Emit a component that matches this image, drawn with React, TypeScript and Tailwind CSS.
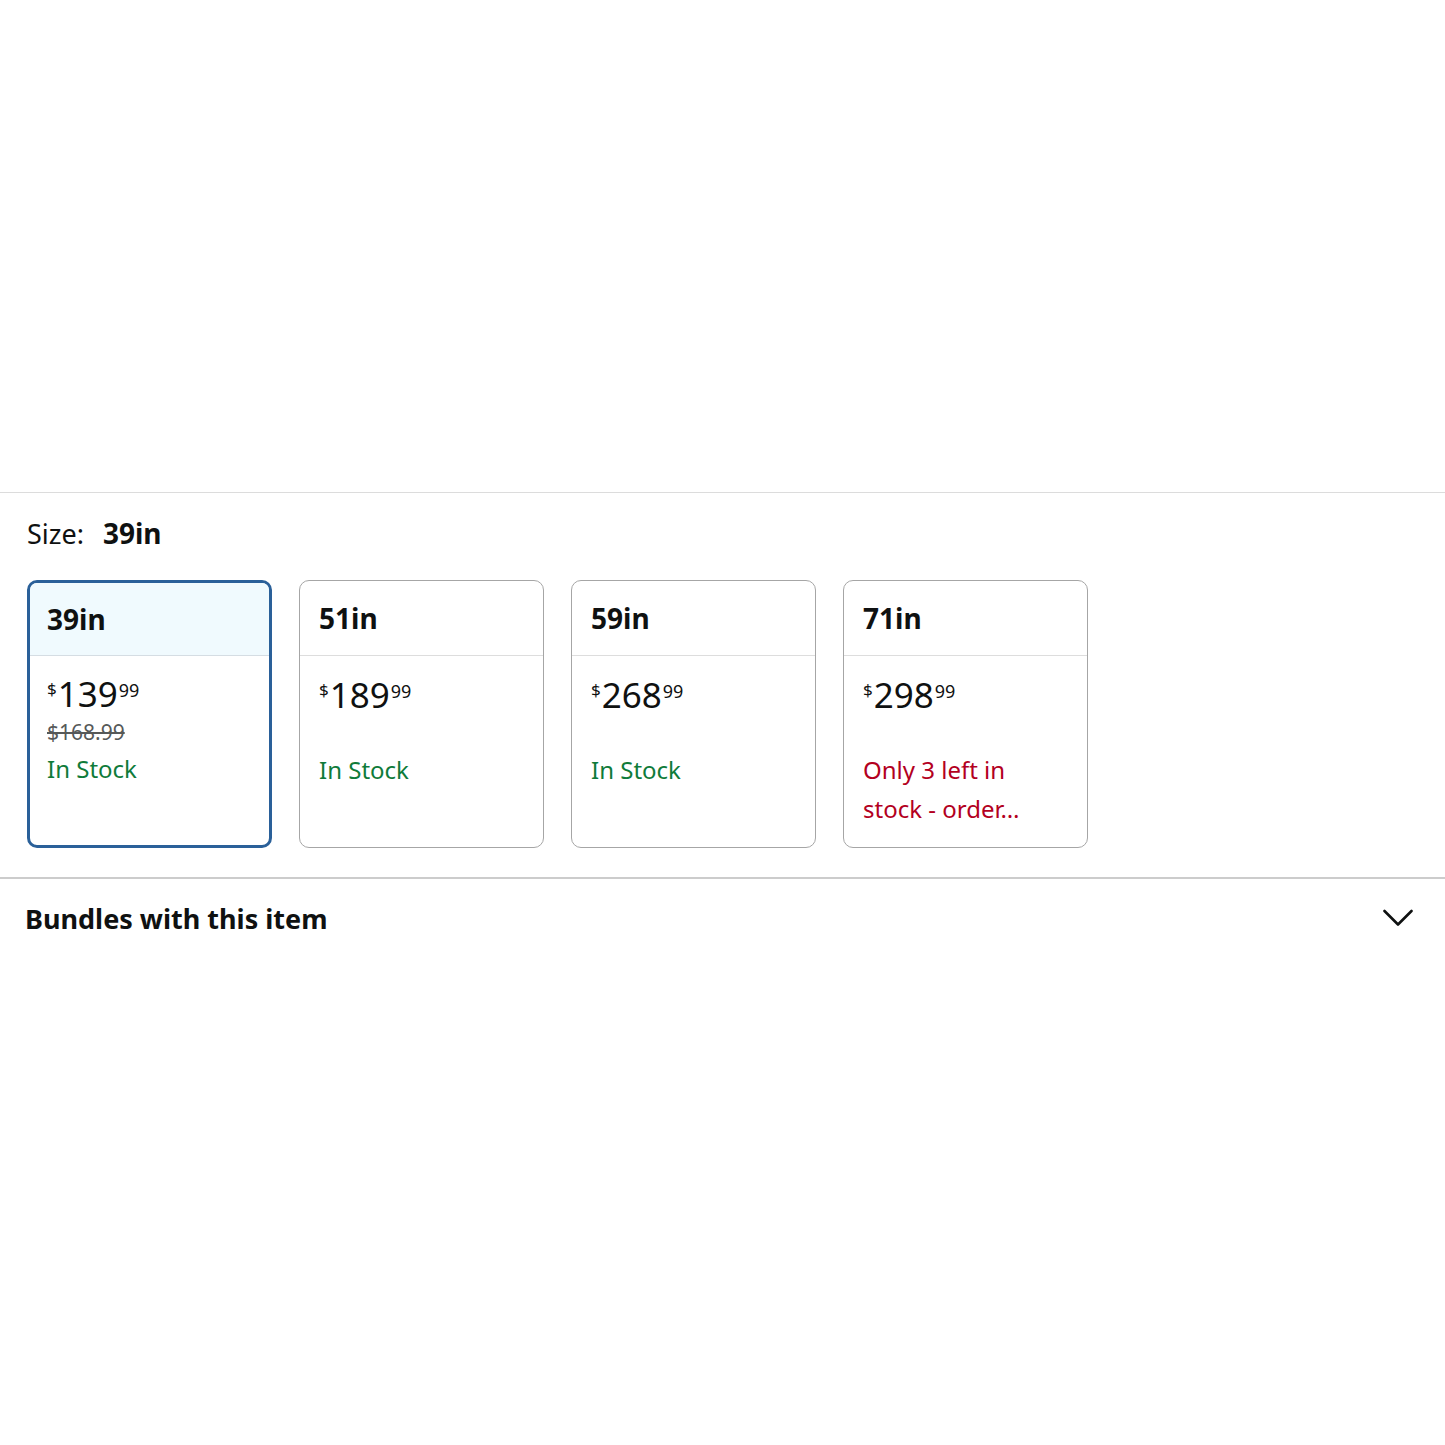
interface SizeOption {
  label: string;
  dollars: string;
  cents: string;
  listPrice?: string;
  stock: string[];
  lowStock?: boolean;
}

const options: SizeOption[] = [
  { label: '39in', dollars: '139', cents: '99', listPrice: '$168.99', stock: ['In Stock'] },
  { label: '51in', dollars: '189', cents: '99', stock: ['In Stock'] },
  { label: '59in', dollars: '268', cents: '99', stock: ['In Stock'] },
  { label: '71in', dollars: '298', cents: '99', stock: ['Only 3 left in', 'stock - order…'], lowStock: true },
];

function SizeCard({ option, selected }: { option: SizeOption; selected: boolean }) {
  return (
    <div
      className={
        selected
          ? 'w-[245px] h-[268px] rounded-[10px] border-[3px] border-[#2a6099] overflow-hidden flex flex-col'
          : 'w-[245px] h-[268px] rounded-[10px] border border-[#a6a6a6] overflow-hidden flex flex-col'
      }
    >
      <div
        className={
          selected
            ? 'h-[73px] flex items-center pl-[17px] bg-[#f0fafe] border-b border-[#d5dde3] shrink-0'
            : 'h-[75px] flex items-center pl-[19px] border-b border-[#dddddd] shrink-0'
        }
      >
        <span className="text-[28px] font-bold text-[#0f1111] leading-none">{option.label}</span>
      </div>
      <div className={selected ? 'pl-[17px] pr-2 pt-[18px]' : 'pl-[19px] pr-2 pt-[19px]'}>
        <div className="flex items-start h-[40px] text-[#0f1111]">
          <span className="text-[17px] leading-none mt-[6px] mr-[1px]">$</span>
          <span className="text-[35px] leading-[40px]">{option.dollars}</span>
          <span className="text-[18px] leading-none mt-[7px] ml-[1px]">{option.cents}</span>
        </div>
        <div className="h-[35px] flex items-center pt-[2px]">
          {option.listPrice && (
            <span className="text-[21px] text-[#565959] line-through leading-none">{option.listPrice}</span>
          )}
        </div>
        <div className={option.lowStock ? 'text-[24px] leading-[39px] text-[#b3001e]' : 'text-[24px] leading-[39px] text-[#0f7b3a]'}>
          {option.stock.map((line) => (
            <div key={line} className="whitespace-nowrap">
              {line}
            </div>
          ))}
        </div>
      </div>
    </div>
  );
}

export default function App() {
  return (
    <div className="min-h-[1445px] w-full bg-white" style={{ fontFamily: '"Noto Sans", "Open Sans", Arial, sans-serif' }}>
      <div className="h-[492px]" />
      <div className="border-t border-[#dcdcdc]">
        {/* Size selector */}
        <div className="px-[27px] pt-[22px] pb-[29px]">
          <div className="text-[27px] leading-[36px] text-[#0f1111]">
            Size:<span className="text-[28px] font-bold ml-[19px]">39in</span>
          </div>
          <div className="flex gap-[27px] mt-[28px]">
            {options.map((option, i) => (
              <SizeCard key={option.label} option={option} selected={i === 0} />
            ))}
          </div>
        </div>

        {/* Bundles accordion */}
        <div className="border-t-2 border-[#cccccc] px-[25px] flex items-center justify-between h-[82px]">
          <span className="text-[27px] font-bold text-[#0f1111]">Bundles with this item</span>
          <svg width="30" height="18" viewBox="0 0 30 18" className="mr-[7px] mt-[-2px]" fill="none">
            <polyline points="1.5,2 15,15.5 28.5,2" stroke="#0f1111" strokeWidth="2.6" strokeLinecap="round" strokeLinejoin="round" />
          </svg>
        </div>
      </div>
    </div>
  );
}
